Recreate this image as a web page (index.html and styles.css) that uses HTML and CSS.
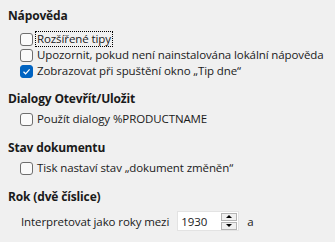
FILE: index.html
```html
<html>
  <head>
    <title>Možnosti</title>
    <meta name="viewport" content="width=device-width, initial-scale=1">
    <link rel="stylesheet" href="styles.css">
  </head>

  <body>
    <div class="section first">
      <div class="heading">Nápověda</div>
      <div class="row"><span class="box"></span><span class="label focus">Rozšířené tipy</span></div>
      <div class="row"><span class="box"></span><span class="label">Upozornit, pokud není nainstalována lokální nápověda</span></div>
      <div class="row">
        <span class="box checked">
          <svg width="9" height="9" viewBox="0 0 9 9"><path d="M1.5 4.8 L3.6 6.8 L7.6 2.4" fill="none" stroke="#fff" stroke-width="1.2"/></svg>
        </span>
        <span class="label">Zobrazovat při spuštění okno „Tip dne“</span>
      </div>
    </div>

    <div class="section">
      <div class="heading">Dialogy Otevřít/Uložit</div>
      <div class="row"><span class="box"></span><span class="label">Použít dialogy %PRODUCTNAME</span></div>
    </div>

    <div class="section">
      <div class="heading">Stav dokumentu</div>
      <div class="row"><span class="box"></span><span class="label">Tisk nastaví stav „dokument změněn“</span></div>
    </div>

    <div class="section year">
      <div class="heading">Rok (dvě číslice)</div>
      <div class="yearrow">
        <span>Interpretovat jako roky mezi</span>
        <span class="spin">
          <span class="value">1930</span>
          <span class="arrows">
            <span class="arrow up"></span>
            <span class="arrow down"></span>
          </span>
        </span>
        <span>a</span>
      </div>
    </div>
  </body>
</html>
```

FILE: styles.css
```css
body {
  font-family: "Open Sans", sans-serif;
  font-size: 11.5px;
  letter-spacing: -0.1px;
  color: #1a1a1a;
  background-color: #f0f0f0;
  margin: 0;
  padding: 8px 0 0 8px;
}

/* ----------------------------------- Sections */
.section {
  margin-bottom: 13px;
}

.section.first {
  margin-bottom: 12px;
}

.heading {
  font-size: 12px;
  letter-spacing: -0.15px;
  font-weight: bold;
  line-height: 16px;
  margin-bottom: 4px;
}

.first .heading {
  margin-bottom: 7px;
}

.year .heading {
  margin-bottom: 6px;
}

.row {
  display: flex;
  align-items: center;
  height: 16px;
  padding-left: 12px;
}

.label {
  margin-left: 2px;
  line-height: 14px;
  padding: 0 1px;
  border: 1px solid transparent;
  white-space: nowrap;
}

.focus {
  border: 1px dotted #000;
}

/* ----------------------------------- Checkbox */
.box {
  display: inline-flex;
  align-items: center;
  justify-content: center;
  flex-shrink: 0;
  box-sizing: border-box;
  width: 13px;
  height: 13px;
  border: 1px solid #6e6e6e;
  border-radius: 3px;
  background-color: #fafafa;
}

.box.checked {
  background-color: #0063c1;
  border-color: #0063c1;
}

/* ----------------------------------- Year spin field */
.yearrow {
  display: flex;
  align-items: center;
  gap: 8px;
  padding-left: 13px;
  height: 20px;
}

.spin {
  display: flex;
  align-items: center;
  justify-content: space-between;
  box-sizing: border-box;
  width: 62px;
  height: 20px;
  background-color: #fff;
  border: 1px solid #e3e3e3;
  padding: 0 1px 0 3px;
}

.arrows {
  display: flex;
  flex-direction: column;
  gap: 1px;
}

.arrow {
  display: flex;
  align-items: center;
  justify-content: center;
  box-sizing: border-box;
  width: 16px;
  height: 8px;
  border: 1px solid #b4b4b4;
  background-color: #f0f0f0;
}

.arrow::after {
  content: "";
  border-left: 3px solid transparent;
  border-right: 3px solid transparent;
}

.up::after {
  border-bottom: 3px solid #000;
}

.down::after {
  border-top: 3px solid #000;
}
```
